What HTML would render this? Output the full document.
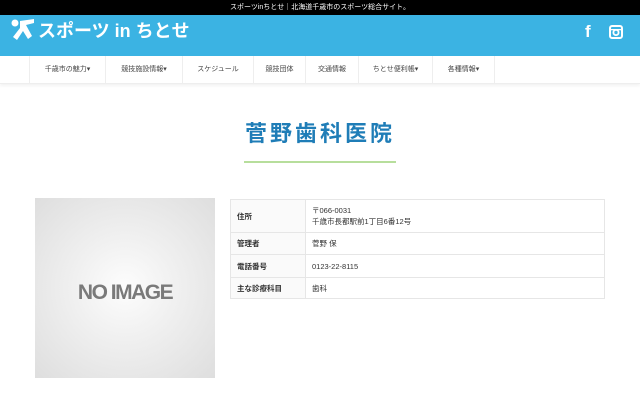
<!DOCTYPE html>
<html><head><meta charset="utf-8"><style>
*{margin:0;padding:0;box-sizing:border-box}
body{width:640px;height:400px;overflow:hidden;background:#fff;font-family:"Liberation Sans","Noto Sans CJK JP",sans-serif;color:#333;position:relative}
.top{position:absolute;left:0;top:0;width:640px;height:15px;background:#000;color:#fff;font-size:7px;text-align:center;line-height:15px}
.hd{position:absolute;left:0;top:15px;width:640px;height:41px;background:#3bb3e3}
.logo{position:absolute;left:38px;top:4px;color:#fff;font-size:18px;font-weight:bold;line-height:24px}
.nav{position:absolute;left:0;top:56px;width:640px;height:28px;background:#fff;border-bottom:1px solid #eee;box-shadow:0 2px 3px rgba(0,0,0,.05)}
.nav div{position:absolute;top:0;height:28px;line-height:28px;font-size:7px;color:#444;text-align:center;border-left:1px solid #eee}
h1{position:absolute;left:0;top:120px;width:640px;text-align:center;font-size:22px;letter-spacing:3px;color:#1f7db7;font-weight:bold;line-height:28px}
.ul{position:absolute;left:244px;top:161px;width:152px;height:2px;background:#b7de9c}
.img{position:absolute;left:35px;top:198px;width:180px;height:180px;background:radial-gradient(circle at 50% 50%,#fdfdfd 0%,#f0f0f0 40%,#dedede 100%);text-align:center;line-height:190px;font-size:21px;font-weight:bold;color:#7a7a7a;letter-spacing:-1.5px}
table{position:absolute;left:230px;top:199px;width:375px;border-collapse:collapse;font-size:7.5px}
td{border:1px solid #e6e6e6;padding:0 6px;vertical-align:middle}
td.l{width:75px;background:#fafafa;font-weight:bold;color:#333}
</style></head><body>
<div class="top">スポーツinちとせ｜北海道千歳市のスポーツ総合サイト。</div>
<div class="hd">
<svg style="position:absolute;left:10px;top:3px" width="26" height="24" viewBox="0 0 26 24"><g fill="#fff"><circle cx="5" cy="5" r="3.5"/><path d="M10 3 L24 1 L24 5 L16 7 L22 18 L18 21 L13 13 L7 22 L3 19 L10 10 Z"/></g></svg>
<div class="logo">スポーツ in ちとせ</div>
<div style="position:absolute;left:585px;top:7px;color:#fff;font-size:17px;font-weight:bold">f</div>
<svg style="position:absolute;left:609px;top:10px" width="14" height="14" viewBox="0 0 14 14"><rect x="1" y="1" width="12" height="12" rx="2" fill="none" stroke="#fff" stroke-width="2"/><circle cx="7" cy="7.5" r="2.6" fill="none" stroke="#fff" stroke-width="1.8"/><rect x="1" y="4" width="12" height="1.3" fill="#fff"/></svg>
</div>
<div class="nav">
<div style="left:29px;width:76px">千歳市の魅力▾</div>
<div style="left:105px;width:77px">競技施設情報▾</div>
<div style="left:182px;width:71px">スケジュール</div>
<div style="left:253px;width:52px">競技団体</div>
<div style="left:305px;width:53px">交通情報</div>
<div style="left:358px;width:74px">ちとせ便利帳▾</div>
<div style="left:432px;width:62px">各種情報▾</div>
<div style="left:494px;width:1px"></div>
</div>
<h1>菅野歯科医院</h1>
<div class="ul"></div>
<div class="img">NO IMAGE</div>
<table>
<tr style="height:33px"><td class="l">住所</td><td>〒066-0031<br>千歳市長都駅前1丁目6番12号</td></tr>
<tr style="height:22px"><td class="l">管理者</td><td>菅野 保</td></tr>
<tr style="height:23px"><td class="l">電話番号</td><td>0123-22-8115</td></tr>
<tr style="height:21px"><td class="l">主な診療科目</td><td>歯科</td></tr>
</table>
</body></html>
